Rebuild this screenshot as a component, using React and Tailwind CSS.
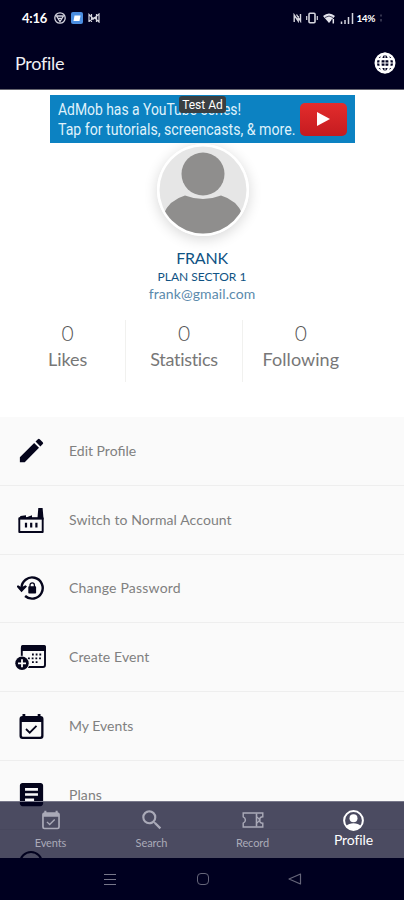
import React from "react";
import { MdEdit, MdArticle, MdSearch } from "react-icons/md";

const GlobeIcon = () => (
  <svg width="22" height="22" viewBox="0 0 22 22" fill="none" stroke="#fff">
    <circle cx="11" cy="11" r="9.300" strokeWidth="2.400" />
    <ellipse cx="11" cy="11" rx="4.600" ry="9.300" strokeWidth="2.200" />
    <path d="M11 1.500v19M1.500 11h19" strokeWidth="1" />
    <path d="M2.500 7.200h17M2.500 14.800h17" strokeWidth="2.200" />
  </svg>
);

const FactoryIcon = () => (
  <svg width="26" height="26" viewBox="0 0 26 26" fill="none">
    <path d="M1.300 25V11.200h23.400V25z" stroke="#05051c" strokeWidth="1.900" strokeLinejoin="round" />
    <path d="M.4 12.500L2.500 9l5.500-.8v2.300l6-2.300v2.600h5.500L20.300 1h4.300l1 11.500z" fill="#05051c" />
    <path d="M8 15.800v4.700M13.200 15.800v4.700M18.400 15.800v4.700" stroke="#05051c" strokeWidth="2.200" />
  </svg>
);

const PasswordIcon = () => (
  <svg width="28" height="26" viewBox="0 0 28 26" fill="none">
    <path d="M4.500 13a10.600 10.600 0 1 1 3.600 8" stroke="#05051c" strokeWidth="2.400" />
    <path d="M-.5 11.500l5 5.700 5.500-5.700-1.500-1.300-4 2-3.500-2z" fill="#05051c" />
    <rect x="11.300" y="11.200" width="7.800" height="7.300" rx="0.800" fill="#05051c" />
    <path d="M13 12V10a2.200 2.200 0 0 1 4.400 0v2" stroke="#05051c" strokeWidth="1.300" />
  </svg>
);

const CreateEventIcon = () => (
  <svg width="32" height="27" viewBox="0 0 32 27" fill="none">
    <rect x="6.800" y="2" width="23.200" height="21" rx="2" stroke="#05051c" strokeWidth="1.900" />
    <path d="M6 7V3q0-2 2-2h21q2 0 2 2v4z" fill="#05051c" />
    <path
      d="M17 10.500h10.500M13 14.300h14.500M17 18.200h7"
      stroke="#05051c"
      strokeWidth="1.800"
      strokeDasharray="1.800 1.900"
    />
    <circle cx="7" cy="19.300" r="7.600" fill="#fafafa" />
    <circle cx="7" cy="19.300" r="6.700" fill="#05051c" />
    <path d="M7 15.300v8M3 19.300h8" stroke="#fafafa" strokeWidth="1.800" />
  </svg>
);

const CalendarCheckIcon = ({ size = 27 }) => (
  <svg width={size} height={size} viewBox="0 0 26 27" fill="none">
    <path
      fillRule="evenodd"
      d="M4 1h2.800v2h12.400V1H22v2q3 .2 3 3v17q0 3-3 3H4q-3 0-3-3V6q0-2.800 3-3zM3.300 9v13.500q0 1.300 1.300 1.300h16.800q1.300 0 1.300-1.300V9z"
      fill="currentColor"
    />
    <path d="M7.500 16l3.700 3.700 6.800-6.900" stroke="currentColor" strokeWidth="1.800" />
  </svg>
);

const TicketIcon = () => (
  <svg width="22" height="16" viewBox="0 0 22 16" fill="none">
    <path
      d="M1.200 1h19.600v3.800a3.200 3.200 0 0 0 0 6.400V15H1.200v-3.800q2.200-.8 2.200-3.200T1.200 4.800z"
      stroke="currentColor"
      strokeWidth="1.400"
    />
    <path d="M14.500 1.500v13" stroke="currentColor" strokeWidth="1.600" />
    <path d="M15 5l3 3-3 3" stroke="currentColor" strokeWidth="1.200" />
  </svg>
);

const AccountIcon = () => (
  <svg width="21" height="21" viewBox="0 0 21 21">
    <circle cx="10.500" cy="10.500" r="9.400" fill="none" stroke="#fff" strokeWidth="2" />
    <circle cx="10.500" cy="8.300" r="4" fill="#fff" />
    <path d="M3.300 16q2.500-2.800 7.200-2.800t7.200 2.800a9.200 9.200 0 0 1-14.400 0z" fill="#fff" />
  </svg>
);

const menuItems = [
  { title: "Edit Profile", icon: <MdEdit size={31} />, text: "tracking-[0px]" },
  { title: "Switch to Normal Account", icon: <FactoryIcon />, text: "tracking-[0.090px]" },
  { title: "Change Password", icon: <PasswordIcon />, text: "tracking-[0.200px]" },
  { title: "Create Event", icon: <CreateEventIcon />, text: "tracking-[0.100px]" },
  { title: "My Events", icon: <CalendarCheckIcon />, text: "tracking-[0px]" },
  { title: "Plans", icon: <MdArticle size={31} />, text: "tracking-[0.100px]" },
];

const stats = [
  { label: "Likes", value: 0, text: "tracking-[0px]" },
  { label: "Statistics", value: 0, text: "tracking-[-0.300px]" },
  { label: "Following", value: 0, text: "tracking-[0.050px]" },
];

const tabs = [
  { label: "Events", icon: <CalendarCheckIcon size={20} /> },
  { label: "Search", icon: <MdSearch size={26} /> },
  { label: "Record", icon: <TicketIcon /> },
  { label: "Profile", icon: <AccountIcon />, active: true },
];

const StatusBar = () => (
  <div className="flex h-9 items-center justify-between pl-[22px] pr-[22px] text-white">
    <div className="flex items-center gap-[7px]">
      <span className="text-[13px] font-bold leading-none tracking-[-0.2px]">4:16</span>
      <svg width="12" height="12" viewBox="0 0 12 12" fill="none" stroke="#d4d4df">
        <circle cx="6" cy="6" r="5.200" strokeWidth="1.300" />
        <path d="M2.500 4h7L6 9.500zM4 6.300h4" strokeWidth="1.300" />
      </svg>
      <svg width="12" height="12" viewBox="0 0 12 12" className="-ml-[2px]">
        <rect width="12" height="12" rx="2" fill="#4b8ee0" />
        <path d="M3.500 3.500h6l-1 5.500h-6z" fill="#fff" />
      </svg>
      <svg width="12" height="10" viewBox="0 0 12 10" fill="none" stroke="#d5d5de" className="-ml-[2px]">
        <path d="M1 9V1.500l4.500 4.500L11 1v8L6.500 4.500 1 8.500M3.500 1v8M8.500 1v8" strokeWidth="1.200" />
      </svg>
    </div>
    <div className="flex items-center">
      <svg width="9" height="10" viewBox="0 0 9 10" fill="none" stroke="#d5d5de">
        <path d="M1.200 9V2l4 6V3M3.500 1.500l4 6.500V1" strokeWidth="1.400" />
      </svg>
      <svg width="12" height="12" viewBox="0 0 12 12" fill="none" stroke="#d5d5de" className="ml-1">
        <rect x="3" y="1.200" width="6" height="9.600" rx="1" strokeWidth="1.600" />
        <path d="M.7 4v4M11.300 4v4" strokeWidth="1.200" />
      </svg>
      <svg width="13" height="11" viewBox="0 0 13 11" className="ml-[5px]">
        <path d="M0 3q6-5 12 0L6 10z" fill="#e5e5ee" />
        <path d="M2 4.500q4-3 8 0M9 6v5M11.500 6v5" stroke="#000020" fill="none" strokeWidth=".7" />
        <path d="M10.300 6v4.500" stroke="#e5e5ee" strokeWidth="1.500" />
      </svg>
      <svg width="14" height="11" viewBox="0 0 14 11" stroke="#d5d5de" strokeWidth="1.500" className="ml-[4px]">
        <path d="M1.500 8.500V11M5 7v4M8.500 4v7M12.500 0v11" />
      </svg>
      <span className="ml-[2px] text-[10px] font-bold leading-none tracking-[-0.4px]">14%</span>
      <svg width="3" height="10" viewBox="0 0 3 10" className="ml-1">
        <path d="M2 1.500v2M2 6v2.500" stroke="#66667b" />
      </svg>
    </div>
  </div>
);

const AdBanner = () => (
  <div className="relative z-10 ml-[50px] flex h-[48px] w-[305px] shrink-0 items-center bg-[#0c82c2] pl-2">
    <div className="w-[238px] whitespace-nowrap pt-px font-['Roboto',sans-serif] text-[16px] leading-[20px] text-[#dff1fb]">
      <p className="origin-left scale-x-[0.868]">AdMob has a YouTube series!</p>
      <p className="origin-left scale-x-[0.884]">Tap for tutorials, screencasts, &amp; more.</p>
    </div>
    <div className="ml-[4px] flex h-[33px] w-[47px] items-center justify-center rounded-[5px] bg-gradient-to-b from-[#e32c2c] to-[#c51b20]">
      <svg width="13" height="14" viewBox="0 0 14 15" fill="#fff">
        <path d="M0 0l14 7.500L0 15z" />
      </svg>
    </div>
    <span className="absolute left-[129px] top-px flex h-[17px] w-[47px] items-center justify-center whitespace-nowrap rounded-[3px] bg-[#3a3f42] font-['Roboto',sans-serif] text-[12px] leading-none text-white">
      Test Ad
    </span>
  </div>
);

const Avatar = () => (
  <div className="ml-[157px] mt-[1px] h-[92px] w-[92px] shrink-0 rounded-full shadow-[0_3px_14px_rgba(0,0,0,0.16)]">
    <svg width="92" height="92" viewBox="0 0 92 92">
      <defs>
        <clipPath id="avatarClip">
          <circle cx="46" cy="46" r="43.500" />
        </clipPath>
      </defs>
      <circle cx="46" cy="46" r="46" fill="#fff" />
      <g clipPath="url(#avatarClip)">
        <rect width="92" height="92" fill="#e6e6e6" />
        <path d="M6 71Q12 56 28 51.500q18 7 36 0Q80 56 86 71v21H6z" fill="#8f8e8d" />
      </g>
      <circle cx="46" cy="30" r="21.500" fill="#8f8e8d" />
    </svg>
  </div>
);

const App = () => {
  return (
    <div className="relative flex h-[900px] w-[404px] flex-col overflow-hidden bg-white font-['Lato',sans-serif]">
      {/* Header */}
      <header className="h-[90px] shrink-0 border-b border-[#65656f] bg-[#000020]">
        <StatusBar />
        <div className="flex h-[54px] items-center justify-between pl-[15px] pr-[8px] text-[#f0f0f4]">
          <h1 className="text-[18px] leading-none tracking-[-0.3px]">Profile</h1>
          <GlobeIcon />
        </div>
      </header>

      {/* Profile summary */}
      <section className="flex h-[327px] shrink-0 flex-col pt-[5px]">
        <AdBanner />
        <Avatar />
        <div className="flex flex-col items-center whitespace-nowrap text-[#105384]">
          <p className="mt-[12px] text-[16px] leading-[20px] tracking-[-0.2px]">FRANK</p>
          <p className="text-[12px] leading-[17px]">PLAN SECTOR 1</p>
          <p className="text-[14px] leading-[17px] tracking-[0.1px] text-[#5b8aac]">frank@gmail.com</p>
        </div>
        <div className="ml-[10px] mt-[18px] flex w-[349px] items-start">
          {stats.map((stat, index) => (
            <div
              key={index}
              className={`flex h-[62px] w-1/3 flex-col items-center text-[#555] ${
                index < 2 ? "border-r border-[#f1f1ef]" : ""
              }`}
            >
              <span className="text-[21px] font-light leading-[26px]">{stat.value}</span>
              <span className={`text-[18px] leading-[27px] text-[#777] ${stat.text}`}>{stat.label}</span>
            </div>
          ))}
        </div>
      </section>

      {/* Menu */}
      <ul className="shrink-0 bg-[#fafafa]">
        {menuItems.map((item, index) => (
          <li key={index} className="flex h-[68.800px] items-center border-b border-[#eeeeee]">
            <div className="flex w-[62px] shrink-0 justify-center text-[#05051c]">{item.icon}</div>
            <p className={`ml-[7px] whitespace-nowrap text-[14px] leading-5 text-[#808080] ${item.text}`}>
              {item.title}
            </p>
          </li>
        ))}
        <li className="flex h-[69px] justify-start pl-[19px] pt-[21px]">
          <div className="h-6 w-6 rounded-full border-2 border-[#05051c]"></div>
        </li>
      </ul>

      {/* Bottom tabs sit over the list */}
      <div className="absolute inset-x-0 bottom-0">
        <nav className="flex h-[57px] border-t border-[#77778a] bg-[#000020]/70">
          {tabs.map((tab, index) => (
            <div
              key={index}
              className={`flex w-1/4 flex-col items-center ${tab.active ? "text-white" : "text-[#aaaab8]"}`}
            >
              <div className={`flex items-center ${tab.active ? "h-[36px]" : "h-[36px]"}`}>{tab.icon}</div>
              <span
                className={
                  tab.active
                    ? "-mt-[6px] text-[14px] leading-4 tracking-[-0.1px]"
                    : "-mt-[3px] text-[11px] leading-4 tracking-[-0.1px]"
                }
              >
                {tab.label}
              </span>
            </div>
          ))}
        </nav>
        <div className="flex h-[42px] items-center bg-[#000020] text-[#66667a]">
          <div className="ml-[104px] flex w-3 flex-col gap-1">
            <div className="h-px bg-[#77778a]"></div>
            <div className="h-px bg-[#77778a]"></div>
            <div className="h-px bg-[#77778a]"></div>
          </div>
          <div className="ml-[81px] h-3 w-[12px] rounded-[4px] border border-[#66667a]"></div>
          <svg width="14" height="12" viewBox="0 0 14 12" fill="none" className="ml-[79px]">
            <path d="M12.500 1v10L1 6z" stroke="#66667a" strokeWidth="1.200" strokeLinejoin="round" />
          </svg>
        </div>
      </div>
    </div>
  );
};

export default App;
